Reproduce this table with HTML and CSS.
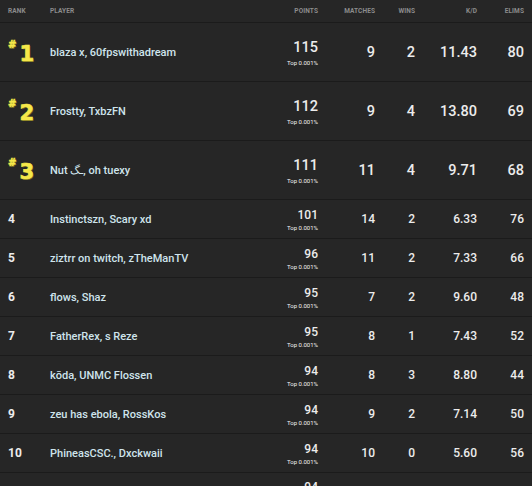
FILE: index.html
```html
<!DOCTYPE html>
<html lang="en">
<head>
    <meta charset="UTF-8">
    <meta name="viewport" content="width=device-width, initial-scale=1.0">
    <title>Leaderboard</title>
    <link rel="stylesheet" href="styles.css">
</head>
<body>
    <div class="board">
        <div class="row head">
            <div>Rank</div>
            <div>Player</div>
            <div class="num">Points</div>
            <div class="num">Matches</div>
            <div class="num">Wins</div>
            <div class="num">K/D</div>
            <div class="num">Elims</div>
        </div>

        <div class="row top">
            <div class="rank"><span class="hash">#</span>1</div>
            <div class="player">blaza x, 60fpswithadream</div>
            <div class="num points"><span class="pts">115</span><span class="pct">Top 0.001%</span></div>
            <div class="num">9</div>
            <div class="num">2</div>
            <div class="num">11.43</div>
            <div class="num">80</div>
        </div>
        <div class="row top">
            <div class="rank"><span class="hash">#</span>2</div>
            <div class="player">Frostty, TxbzFN</div>
            <div class="num points"><span class="pts">112</span><span class="pct">Top 0.001%</span></div>
            <div class="num">9</div>
            <div class="num">4</div>
            <div class="num">13.80</div>
            <div class="num">69</div>
        </div>
        <div class="row top">
            <div class="rank"><span class="hash">#</span>3</div>
            <div class="player">Nut ـگ, oh tuexy</div>
            <div class="num points"><span class="pts">111</span><span class="pct">Top 0.001%</span></div>
            <div class="num">11</div>
            <div class="num">4</div>
            <div class="num">9.71</div>
            <div class="num">68</div>
        </div>

        <div class="row">
            <div class="rank">4</div>
            <div class="player">Instinctszn, Scary xd</div>
            <div class="num points"><span class="pts">101</span><span class="pct">Top 0.001%</span></div>
            <div class="num">14</div>
            <div class="num">2</div>
            <div class="num">6.33</div>
            <div class="num">76</div>
        </div>
        <div class="row">
            <div class="rank">5</div>
            <div class="player">ziztrr on twitch, zTheManTV</div>
            <div class="num points"><span class="pts">96</span><span class="pct">Top 0.001%</span></div>
            <div class="num">11</div>
            <div class="num">2</div>
            <div class="num">7.33</div>
            <div class="num">66</div>
        </div>
        <div class="row">
            <div class="rank">6</div>
            <div class="player">flows, Shaz</div>
            <div class="num points"><span class="pts">95</span><span class="pct">Top 0.001%</span></div>
            <div class="num">7</div>
            <div class="num">2</div>
            <div class="num">9.60</div>
            <div class="num">48</div>
        </div>
        <div class="row">
            <div class="rank">7</div>
            <div class="player">FatherRex, s Reze</div>
            <div class="num points"><span class="pts">95</span><span class="pct">Top 0.001%</span></div>
            <div class="num">8</div>
            <div class="num">1</div>
            <div class="num">7.43</div>
            <div class="num">52</div>
        </div>
        <div class="row">
            <div class="rank">8</div>
            <div class="player">kōda, UNMC Flossen</div>
            <div class="num points"><span class="pts">94</span><span class="pct">Top 0.001%</span></div>
            <div class="num">8</div>
            <div class="num">3</div>
            <div class="num">8.80</div>
            <div class="num">44</div>
        </div>
        <div class="row">
            <div class="rank">9</div>
            <div class="player">zeu has ebola, RossKos</div>
            <div class="num points"><span class="pts">94</span><span class="pct">Top 0.001%</span></div>
            <div class="num">9</div>
            <div class="num">2</div>
            <div class="num">7.14</div>
            <div class="num">50</div>
        </div>
        <div class="row">
            <div class="rank">10</div>
            <div class="player">PhineasCSC., Dxckwaii</div>
            <div class="num points"><span class="pts">94</span><span class="pct">Top 0.001%</span></div>
            <div class="num">10</div>
            <div class="num">0</div>
            <div class="num">5.60</div>
            <div class="num">56</div>
        </div>
        <div class="row last">
            <div class="rank"></div>
            <div class="player"></div>
            <div class="num points"><span class="pts">94</span></div>
        </div>
    </div>
</body>
</html>
```

FILE: styles.css
```css
body {
    margin: 0;
    background-color: #262626;
    font-family: Roboto, "Liberation Sans", sans-serif;
    color: #ececec;
    overflow: hidden;
}
.board {
    width: 532px;
    height: 486px;
    overflow: hidden;
}
.row {
    display: grid;
    grid-template-columns: 42px 200px 68px 57px 40px 62px 47px;
    align-items: center;
    height: 38px;
    padding: 0 8px;
    border-bottom: 1px solid #1b1b1b;
    font-size: 12px;
    font-weight: 500;
}
.row.head {
    height: 22px;
    font-size: 6.5px;
    font-weight: 700;
    text-transform: uppercase;
    color: #8c8c8c;
    letter-spacing: 0.1px;
}
.row.top {
    height: 58px;
    font-size: 14.5px;
}
.row.last {
    align-items: start;
    padding-top: 7px;
    height: 20px;
    border-bottom: none;
}
.num {
    text-align: right;
}
.points {
    display: flex;
    flex-direction: column;
    align-items: flex-end;
}
.pct {
    font-size: 6px;
    font-weight: 400;
    margin-top: 2px;
    color: #f2f2f2;
}
.top .pct {
    margin-top: 3px;
}
.player {
    font-size: 11px;
    font-weight: 500;
    color: #cfe4ec;
}
.rank {
    font-weight: 700;
}
.top .rank {
    font-family: "DejaVu Sans", sans-serif;
    font-size: 21px;
    font-weight: 900;
    color: #f5e84a;
    line-height: 1;
    padding-top: 5px;
    -webkit-text-stroke: 0.7px #f5e84a;
    text-shadow: 1px 1px 0 #6b6420;
}
.hash {
    display: inline-block;
    font-size: 10px;
    vertical-align: top;
    margin-right: 3px;
    margin-top: -4px;
    -webkit-text-stroke: 0.5px #f5e84a;
}
```
